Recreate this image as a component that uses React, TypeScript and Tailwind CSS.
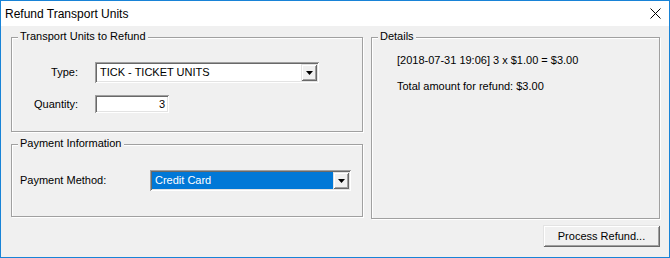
import React from 'react';

const sunken = 'bg-white shadow-[inset_1px_1px_0_#a0a0a0,inset_-1px_-1px_0_#ffffff,inset_2px_2px_0_#696969,inset_-2px_-2px_0_#e3e3e3]';
const raised = 'bg-[#f0f0f0] shadow-[inset_1px_1px_0_#e3e3e3,inset_-1px_-1px_0_#696969,inset_2px_2px_0_#ffffff,inset_-2px_-2px_0_#a0a0a0]';

function GroupBox({ title, className, children }: { title: string; className: string; children?: React.ReactNode }) {
    return (
        <div className={`relative border border-[#a0a0a0] shadow-[inset_1px_1px_0_#fff,1px_1px_0_#fff] ${className}`}>
            <span className="absolute left-[6px] top-[-8px] bg-[#f0f0f0] px-[2px] leading-[13px]">{title}</span>
            {children}
        </div>
    );
}

function DropArrow() {
    return (
        <div className={`flex w-[16px] h-[17px] items-center justify-center ${raised}`}>
            <svg width="7" height="4" viewBox="0 0 7 4"><path d="M0 0H7L3.5 4Z" fill="#000" /></svg>
        </div>
    );
}

function Combo({ value, width, selected }: { value: string; width: string; selected?: boolean }) {
    return (
        <div className={`flex h-[21px] items-center p-[2px] ${sunken} ${width}`}>
            <div className={`flex h-[17px] flex-1 items-center pl-[3px] ${selected ? 'bg-[#0078d7] text-white' : ''}`}>{value}</div>
            <DropArrow />
        </div>
    );
}

export default function App() {
    return (
        <div
            className="w-[670px] h-[258px] flex flex-col border border-[#1883d7] bg-[#f0f0f0] text-[11px] text-black"
            style={{ fontFamily: '"Liberation Sans", Arial, sans-serif' }}
        >
            <div className="flex h-[25px] items-center justify-between bg-white pl-[4px] pr-[8px]">
                <span className="text-[12px]">Refund Transport Units</span>
                <svg width="11" height="11" viewBox="0 0 11 11">
                    <path d="M0.5 0.5L10.5 10.5M10.5 0.5L0.5 10.5" stroke="#000" strokeWidth="1" />
                </svg>
            </div>
            <div className="flex flex-1 flex-col pl-[10px] pr-[9px] pt-[11px]">
                <div className="flex items-start gap-[8px]">
                    <div className="flex flex-col gap-[12px]">
                        <GroupBox title="Transport Units to Refund" className="w-[352px] h-[95px]">
                            <div className="flex flex-col gap-[12px] pt-[24px]">
                                <div className="flex items-center gap-[17px]">
                                    <span className="w-[66px] text-right">Type:</span>
                                    <Combo value="TICK - TICKET UNITS" width="w-[224px]" />
                                </div>
                                <div className="flex items-center gap-[17px]">
                                    <span className="w-[66px] text-right">Quantity:</span>
                                    <div className={`flex h-[18px] w-[74px] items-center justify-end pr-[4px] ${sunken}`}>3</div>
                                </div>
                            </div>
                        </GroupBox>
                        <GroupBox title="Payment Information" className="w-[352px] h-[73px]">
                            <div className="flex items-center pl-[8px] pt-[25px]">
                                <span className="w-[130px]">Payment Method:</span>
                                <Combo value="Credit Card" width="w-[201px]" selected />
                            </div>
                        </GroupBox>
                    </div>
                    <GroupBox title="Details" className="w-[289px] h-[182px]">
                        <div className="flex flex-col gap-[13px] pl-[25px] pt-[16px] leading-[13px]">
                            <span>[2018-07-31 19:06] 3 x $1.00 = $3.00</span>
                            <span>Total amount for refund: $3.00</span>
                        </div>
                    </GroupBox>
                </div>
                <div className="mt-[6px] flex justify-end">
                    <button type="button" className={`h-[22px] w-[117px] ${raised}`}>Process Refund...</button>
                </div>
            </div>
        </div>
    );
}
